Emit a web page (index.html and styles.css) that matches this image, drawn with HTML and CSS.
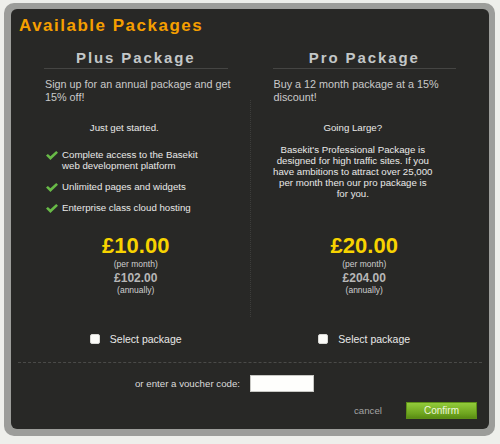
FILE: index.html
```html
<!DOCTYPE html>
<html>
<head>
<meta charset="utf-8">
<link rel="stylesheet" href="styles.css">
</head>
<body>
<div class="frame">
  <div class="panel">
    <h1 class="title">Available Packages</h1>
    <div class="packages">
      <h2 class="pkg-name col-left">Plus Package</h2>
      <h2 class="pkg-name col-right">Pro Package</h2>
      <p class="pkg-desc col-left">Sign up for an annual package and get 15% off!</p>
      <p class="pkg-desc col-right">Buy a 12 month package at a 15% discount!</p>

      <div class="pkg-body col-left">
        <p class="lead">Just get started.</p>
        <ul class="features">
          <li><svg class="check" viewBox="0 0 12 9"><polygon points="0,4.6 1.9,2.9 4.4,5.3 10.2,0 12,1.7 4.4,8.9"/></svg><span>Complete access to the Basekit web development platform</span></li>
          <li><svg class="check" viewBox="0 0 12 9"><polygon points="0,4.6 1.9,2.9 4.4,5.3 10.2,0 12,1.7 4.4,8.9"/></svg><span>Unlimited pages and widgets</span></li>
          <li><svg class="check" viewBox="0 0 12 9"><polygon points="0,4.6 1.9,2.9 4.4,5.3 10.2,0 12,1.7 4.4,8.9"/></svg><span>Enterprise class cloud hosting</span></li>
        </ul>
      </div>
      <div class="divider"></div>
      <div class="pkg-body col-right">
        <p class="lead">Going Large?</p>
        <p class="lead blurb">Basekit's Professional Package is designed for high traffic sites. If you have ambitions to attract over 25,000 per month then our pro package is for you.</p>
      </div>

      <div class="price col-left">
        <div class="price-main">£10.00</div>
        <div class="price-note">(per month)</div>
        <div class="price-year">£102.00</div>
        <div class="price-note">(annually)</div>
      </div>
      <div class="price col-right">
        <div class="price-main">£20.00</div>
        <div class="price-note">(per month)</div>
        <div class="price-year">£204.00</div>
        <div class="price-note">(annually)</div>
      </div>

      <label class="select col-left"><input class="box" type="checkbox"><span>Select package</span></label>
      <label class="select col-right"><input class="box" type="checkbox"><span>Select package</span></label>
    </div>

    <div class="rule"></div>

    <div class="voucher">
      <label class="voucher-label" for="code">or enter a voucher code:</label>
      <div class="voucher-field"><input id="code" class="voucher-input" type="text"></div>
    </div>

    <div class="actions">
      <a class="cancel">cancel</a>
      <button class="confirm">Confirm</button>
    </div>
  </div>
</div>
</body>
</html>
```
FILE: styles.css
```css
* { box-sizing: border-box; }

html, body {
  margin: 0;
  padding: 0;
  background: #eeefeb;
  font-family: "Liberation Sans", Arial, sans-serif;
}

.frame {
  margin: 3px 0 0 4px;
  width: 491px;
  padding: 6px 6px 7px 7px;
  background: #9c9d9a;
  border-radius: 10px;
}

.panel {
  background: #282826;
  border-radius: 6px;
  padding: 7px 7px 10px 7px;
  height: 420px;
}

.title {
  margin: 0;
  padding-left: 1px;
  font-size: 17px;
  line-height: 20px;
  font-weight: bold;
  letter-spacing: 1.5px;
  color: #f59f00;
}

.packages {
  display: grid;
  grid-template-columns: 1fr 1px 1fr;
  column-gap: 22px;
  padding: 0 26px;
}

.col-left { grid-column: 1; }
.col-right { grid-column: 3; }

.pkg-name {
  grid-row: 1;
  margin: 13px 0 0 0;
  font-size: 15px;
  line-height: 18px;
  font-weight: bold;
  letter-spacing: 1.9px;
  text-align: center;
  color: #c3c7c8;
  padding-bottom: 1px;
  border-bottom: 1px solid #454543;
}

.pkg-desc {
  grid-row: 2;
  margin: 9px -4px 0 1px;
  font-size: 10.8px;
  line-height: 13px;
  color: #cacaca;
}

.pkg-body {
  grid-row: 3;
  height: 130px;
  padding-top: 17.5px;
  width: 160.6px;
  text-align: center;
  font-size: 9.7px;
  line-height: 11px;
  color: #e8e8e8;
}

.lead { margin: 0; }
.blurb { margin-top: 11px; line-height: 11.2px; }

.features {
  list-style: none;
  margin: 16px 0 0 0;
  padding: 0 0 0 2px;
  text-align: left;
}

.features li {
  display: flex;
  align-items: flex-start;
  margin-bottom: 10px;
}

.check {
  flex: none;
  width: 12px;
  height: 9px;
  margin: 2px 4px 0 0;
  fill: #68ba47;
}

.divider {
  grid-column: 2;
  grid-row: 3 / 5;
  margin-top: -4px;
  border-left: 1px dotted #3d3d3b;
}

.price {
  grid-row: 4;
  height: 83px;
  text-align: center;
}

.price-main {
  font-size: 22px;
  line-height: 24px;
  font-weight: bold;
  color: #f7d300;
}

.price-note {
  font-size: 8.5px;
  line-height: 13px;
  color: #cfcfcf;
}

.price-note:last-child { line-height: 10px; }

.price-year {
  font-size: 12px;
  line-height: 14px;
  font-weight: bold;
  color: #b7b7b7;
}

.select {
  grid-row: 5;
  margin-top: 15px;
  display: flex;
  justify-content: center;
  align-items: center;
  gap: 10px;
  font-size: 10.5px;
  line-height: 14px;
  color: #e8e8e8;
}

.box {
  appearance: none;
  -webkit-appearance: none;
  margin: 0;
  width: 10px;
  height: 10px;
  background: #fbfbf8;
  border: 1px solid #d8d8d4;
  border-radius: 2px;
}

.rule {
  margin-top: 16px;
  border-top: 1px dashed #4a4a48;
}

.voucher {
  margin-top: 12px;
  display: grid;
  grid-template-columns: 1fr 1fr;
  align-items: center;
  height: 17px;
}

.voucher-label {
  text-align: right;
  padding-right: 10px;
  font-size: 9.7px;
  color: #dcdcdc;
}

.voucher-field { display: flex; }

.voucher-input {
  width: 64px;
  height: 17px;
  margin: 0;
  padding: 0;
  border: 1px solid #c8c8c4;
  background: #fefefc;
  outline: none;
}

.actions {
  margin-top: 10px;
  display: flex;
  justify-content: flex-end;
  align-items: center;
  padding-right: 5px;
}

.cancel {
  font-size: 9.7px;
  color: #a3a3a3;
  margin-right: 24px;
}

.confirm {
  width: 71px;
  height: 17px;
  padding: 0;
  margin: 0;
  font-family: "Liberation Sans", Arial, sans-serif;
  font-size: 10px;
  color: #eef6dc;
  background: linear-gradient(#92cb3a, #6ea51f 70%, #5a8c14);
  border: 1px solid #5d8f17;
  border-radius: 0;
}
```
